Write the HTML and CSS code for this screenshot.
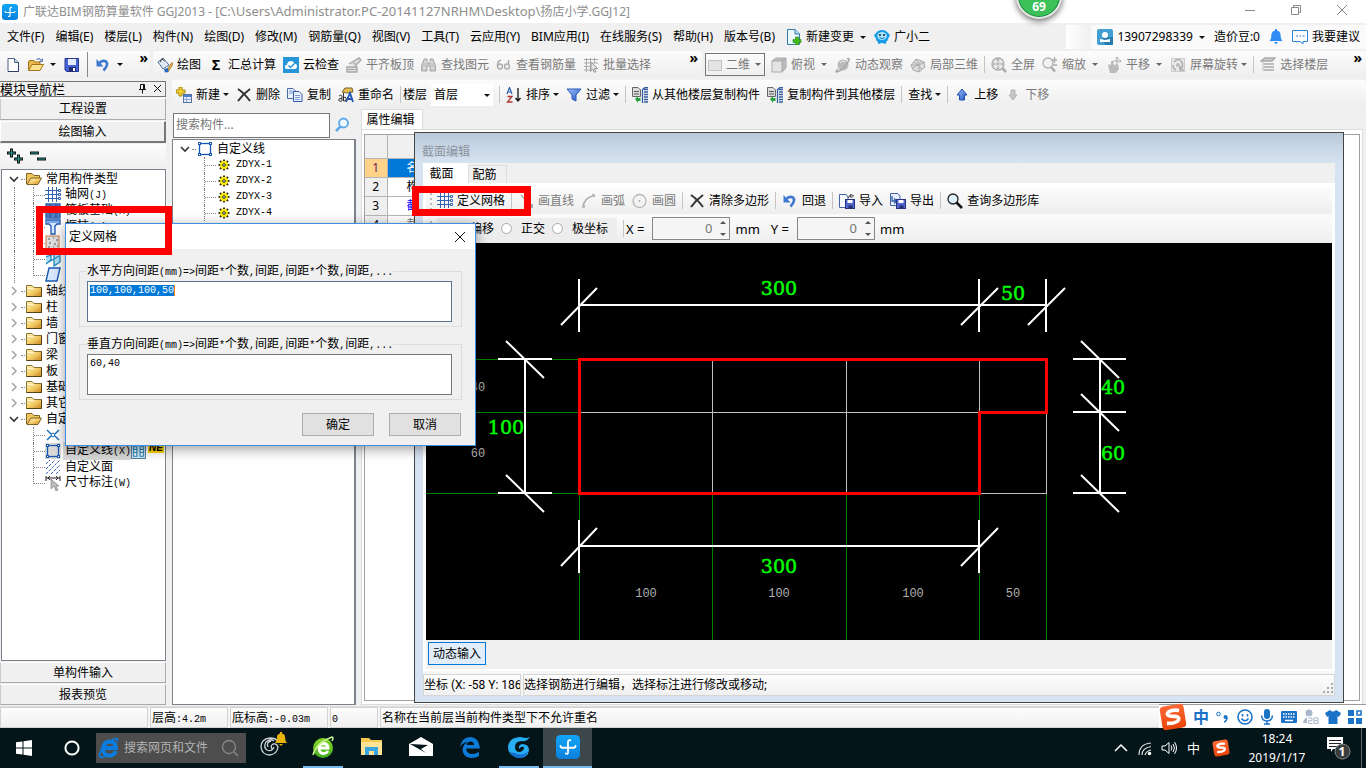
FILE: index.html
```html
<!DOCTYPE html>
<html lang="zh-CN">
<head>
<meta charset="utf-8">
<title>广联达BIM钢筋算量软件 GGJ2013</title>
<link rel="stylesheet" href="styles.css">
</head>
<body>
<svg class="defs" aria-hidden="true">
  <defs>
    <linearGradient id="gFold" x1="0" y1="0" x2="1" y2="1"><stop offset="0" stop-color="#fff3bd"/><stop offset=".5" stop-color="#f5cf6c"/><stop offset="1" stop-color="#c8871c"/></linearGradient>
    <linearGradient id="gApp" x1="0" y1="0" x2="0" y2="1"><stop offset="0" stop-color="#12a5f8"/><stop offset="1" stop-color="#0b7fdc"/></linearGradient>
    <linearGradient id="gBlue" x1="0" y1="0" x2="1" y2="1"><stop offset="0" stop-color="#9dc3ff"/><stop offset="1" stop-color="#2050c0"/></linearGradient>
    <linearGradient id="gGreen" x1="0" y1="0" x2="0" y2="1"><stop offset="0" stop-color="#8bd82a"/><stop offset="1" stop-color="#3fae1c"/></linearGradient>
    <linearGradient id="gSogou" x1="0" y1="0" x2="0" y2="1"><stop offset="0" stop-color="#ff6a35"/><stop offset="1" stop-color="#e84308"/></linearGradient>
  </defs>
  <symbol id="app" viewBox="0 0 16 16"><rect width="16" height="16" rx="3" fill="url(#gApp)"/><path d="M8 10V4.800Q8 3 9.600 3.600M3 7.300Q3 8.500 4.300 8.500H11.700Q13 8.500 13 7.300M8 8V11.500Q8 13 6.500 12.300" fill="none" stroke="#fff" stroke-width="1.200" stroke-linecap="round"/></symbol>
  <symbol id="newdoc" viewBox="0 0 16 16"><path d="M3 1.500H9.500L13.500 5.500V14.500H3Z" fill="#fff" stroke="#4a6187"/><path d="M9.500 1.500V5.500H13.500" fill="#c8d8f0" stroke="#4a6187"/><path d="M13.500 5.500V14.500H3" fill="none" stroke="#2d3f66"/></symbol>
  <symbol id="open" viewBox="0 0 16 16"><path d="M0.500 13V4.500L2 3.500H6L7 5H12V8" fill="#e8b84c" stroke="#a17319"/><path d="M0.500 13.500L4 7.500H15.500L12 13.500Z" fill="#fce18c" stroke="#a17319"/><path d="M8.500 2.500Q11 0 13.500 3.500M14.300 1.500V4.300H11.600" fill="none" stroke="#355f9f"/></symbol>
  <symbol id="save" viewBox="0 0 16 16"><path d="M1 1.500H14.500V14.500H2.500L1 13Z" fill="#4763d8" stroke="#26368d"/><rect x="4" y="2" width="8" height="6" fill="#e4ebff"/><rect x="5" y="10" width="7" height="4.500" fill="#202d70"/><rect x="9" y="11" width="2" height="3" fill="#fff"/></symbol>
  <symbol id="undo" viewBox="0 0 16 16"><path d="M4 6.500Q7 2.500 11 4.500Q14 7.500 8.500 13.500" fill="none" stroke="#3f78cf" stroke-width="2.600"/><path d="M1.500 2V9.500H8.500Z" fill="#3f78cf"/></symbol>
  <symbol id="paint" viewBox="0 0 16 16"><path d="M1 5L6 1L12 8L6 12Z" fill="#dfe8f5" stroke="#56709a"/><path d="M3.500 5Q4 0 7.500 4" fill="none" stroke="#333"/><path d="M9 14L15 5.500L16 7L11 15Z" fill="#e3b341" stroke="#91691c" stroke-width=".7"/><path d="M7 12L11 11L11.500 15L8 15.500Z" fill="#2566c5"/></symbol>
  <symbol id="cloud" viewBox="0 0 16 16"><rect width="16" height="16" fill="#2695d8"/><path d="M4 12Q1.500 12 2 9.500Q2.200 8 4 7.700Q4.500 4 8 4Q10.700 4 11.500 6.800Q14.500 7 14 10Q13.600 12 12 12Z" fill="#fff"/><path d="M5.500 8.500L7.500 10.500L11.500 6.500" fill="none" stroke="#2695d8" stroke-width="1.500"/></symbol>
  <symbol id="align" viewBox="0 0 16 16"><path d="M1 10H11V15H1ZM3 7L13 1L15 3L9 9" fill="#ddd" stroke="#a8a8a8" stroke-width="1.400"/><path d="M1 12.500H11M7 5.500L11 8" stroke="#a8a8a8"/></symbol>
  <symbol id="binoc" viewBox="0 0 16 16"><path d="M3 2H6V6H9V2H12L14.500 9V14H9V9H6V14H0.500V9Z" fill="#c8c8c8" stroke="#aaa"/><path d="M3 5H6M9 5H12M2 11H5M10 11H13" stroke="#eee"/></symbol>
  <symbol id="glasses" viewBox="0 0 16 16"><path d="M5 3Q1 4 1.500 9.500M12.500 3V10" fill="none" stroke="#aaa" stroke-width="1.300"/><circle cx="4" cy="9.500" r="2.500" fill="#eee" stroke="#aaa" stroke-width="1.300"/><circle cx="11" cy="9.500" r="2.500" fill="#eee" stroke="#aaa" stroke-width="1.300"/></symbol>
  <symbol id="batch" viewBox="0 0 16 16"><path d="M1 2.500H15M1 6H15M1 9.500H7M1 13H7M3.500 1V15M7.500 1V15M11.500 1V6" stroke="#aaa" fill="none"/><path d="M8 5L14.500 11.500H11.500L13 15L11 15L10 12L8 13.500Z" fill="#e5e5e5" stroke="#999"/></symbol>
  <symbol id="plane2" viewBox="0 0 16 16"><rect x="1.500" y="3.500" width="13" height="10" fill="#e3e3e3" stroke="#c3c3c3"/></symbol>
  <symbol id="cube" viewBox="0 0 16 16"><path d="M1 4L5 1H15L11 4ZM11 4L15 1V11L11 15Z" fill="#bdbdbd" stroke="#aaa"/><rect x="1" y="4" width="10" height="11" fill="#e4e4e4" stroke="#aaa"/></symbol>
  <symbol id="planet" viewBox="0 0 16 16"><circle cx="8" cy="8" r="5.500" fill="#bbb"/><path d="M3 12Q-1 16 3 14.500Q8 13 13 5Q16 0 12 2" fill="none" stroke="#aaa" stroke-width="1.500"/><path d="M5 6Q7 3 10 5" stroke="#eee" fill="none"/></symbol>
  <symbol id="orbit" viewBox="0 0 16 16"><path d="M1 8L6 2L14 5L15 10L9 15L3 13Z" fill="#ddd" stroke="#aaa"/><path d="M6 2L9 8L9 15M1 8L9 8L15 5M4 5L12 12M3 11L12 4" fill="none" stroke="#aaa"/></symbol>
  <symbol id="full" viewBox="0 0 16 16"><circle cx="7" cy="7" r="6" fill="#eee" stroke="#aaa" stroke-width="1.300"/><path d="M7 2V12M2 7H12M5.500 3.500L7 2L8.500 3.500M5.500 10.500L7 12L8.500 10.500M3.500 5.500L2 7L3.500 8.500M10.500 5.500L12 7L10.500 8.500" stroke="#aaa" fill="none"/><path d="M11.500 11.500L15 15" stroke="#aaa" stroke-width="2.500"/></symbol>
  <symbol id="zoomi" viewBox="0 0 16 16"><circle cx="6" cy="6" r="5" fill="#f2f2f2" stroke="#b2b2b2" stroke-width="1.300"/><path d="M9 10L13 14.500" stroke="#aaa" stroke-width="2.500"/><path d="M10 3H15M12.500 0V6M11 8H15" stroke="#aaa" stroke-width="1.300"/></symbol>
  <symbol id="pan" viewBox="0 0 16 16"><path d="M2 8L4 7L5 9V4L7 4L8 8L12 7L13 12L10 16H4Z" fill="#bbb"/><path d="M11 0V8M7 4H15M9.500 1.500L11 0L12.500 1.500M13.500 2.500L15 4L13.500 5.500" stroke="#aaa" fill="none"/></symbol>
  <symbol id="rot" viewBox="0 0 16 16"><rect x="1.500" y="1.500" width="13" height="13" fill="#e9e9e9" stroke="#ccc"/><path d="M4 5Q8 0 12 5Q14 10 10 12M10 9V13H14M3 8Q3 12 6 13" fill="none" stroke="#aaa" stroke-width="1.500"/><circle cx="8" cy="8" r="2" fill="#bbb"/></symbol>
  <symbol id="floors" viewBox="0 0 16 16"><path d="M1 4L5 1H15L12 4ZM4 7H14M4 10H14M4 13H14" fill="#ccc" stroke="#aaa" stroke-width="1.500"/><path d="M3 5V14" stroke="#bbb"/></symbol>
  <symbol id="newc" viewBox="0 0 16 16"><path d="M3 0H6V3H9V6H6V9H3V6H0V3H3Z" fill="#f4d32b" stroke="#a58811"/><rect x="7.500" y="7.500" width="8" height="8" fill="#e7f0ff" stroke="#56729f"/><rect x="8" y="8" width="7" height="2" fill="#4e7fd2"/><path d="M8 12.500H15M10.500 10V15" stroke="#8fa8cb"/></symbol>
  <symbol id="xdel" viewBox="0 0 16 16"><path d="M2 2Q8 6 14 14M14 2Q7 7 2 14" fill="none" stroke="#333" stroke-width="2"/></symbol>
  <symbol id="copy" viewBox="0 0 16 16"><path d="M.5 1.500H6L9 4.500V11.500H.5Z" fill="#eaf1ff" stroke="#4b6ba7"/><path d="M6.500 4.500H12L15 7.500V14.500H6.500Z" fill="#eaf1ff" stroke="#3159a5"/><path d="M2 4H6M2 6H6M8 8.500H13M8 10.500H13M8 12.500H13" stroke="#7799d8"/></symbol>
  <symbol id="rename" viewBox="0 0 16 16"><path d="M4 5L7 1H14L15 5L9 6Z" fill="#e8bd4e" stroke="#76622b"/><path d="M8 15L12 6L15 15M10 12H14" fill="none" stroke="#2355b5" stroke-width="1.800"/><path d="M1 9Q4 7 4 10V14Q0 15 1 12L4 11M5.500 6V14Q9 14 8 11Q7 9 5.500 11" fill="none" stroke="#333"/></symbol>
  <symbol id="sort" viewBox="0 0 16 16"><path d="M1 7L3.500 0.500L6 7M2 5H5" fill="none" stroke="#2a5fb0" stroke-width="1.200"/><path d="M1.500 9.500H6L1.500 15H6.500" fill="none" stroke="#a33" stroke-width="1.300"/><path d="M12 1V14M9.500 11L12 14L14.500 11" fill="none" stroke="#111" stroke-width="1.300"/></symbol>
  <symbol id="filter" viewBox="0 0 16 16"><path d="M1 2H15L10 8V14L6 12V8Z" fill="url(#gBlue)" stroke="#2a58b8"/></symbol>
  <symbol id="fcopy" viewBox="0 0 16 16"><path d="M.5 .5H6L8.500 3V9.500H.5Z" fill="#ddd" stroke="#666"/><path d="M2 4.500H7M2 7H7" stroke="#555"/><path d="M10.500 3V16M12 2.500H16M12 5H16M12 7.500H16M12 10H16M12 12.500H16M12 15H16M10 3L13 .5H16" fill="none" stroke="#345f9f" stroke-width="1.300"/><path d="M3 12L6 9V11H8.500V14H6V16Z" fill="#27a13b"/></symbol>
  <symbol id="up" viewBox="0 0 16 16"><path d="M8 2L13 8H10.500V13H5.500V8H3Z" fill="url(#gBlue)" stroke="#254fae"/></symbol>
  <symbol id="down" viewBox="0 0 16 16"><path d="M8 13L12 8H10V3H6V8H4Z" fill="#c7c7c7" stroke="#b2b2b2"/></symbol>
  <symbol id="change" viewBox="0 0 16 16"><path d="M1.500 .5H9L13.500 5V15.500H1.500Z" fill="#edf7ff" stroke="#3679a7"/><path d="M9 .5V5H13.500" fill="#b8dcf0" stroke="#3679a7"/><path d="M9.500 8H12.500V10.500H15V13.500H12.500V16H9.500V13.500H7V10.500H9.500Z" fill="#41bb18" stroke="#26870c" stroke-width=".6"/></symbol>
  <symbol id="mascot" viewBox="0 0 16 16"><path d="M2 4L4 2Q8 0 12 2L14 4L16 6L14 10Q14 12 12 13V15L8 14L4 15V13Q2 12 2 10L0 6Z" fill="#179be8"/><ellipse cx="8" cy="7" rx="4.800" ry="4" fill="#a9e2fb"/><circle cx="6" cy="6" r="1" fill="#123"/><circle cx="10" cy="6" r="1" fill="#123"/><path d="M5.500 8.500Q8 11 10.500 8.500" fill="none" stroke="#147dbd"/></symbol>
  <symbol id="user" viewBox="0 0 16 16"><rect width="16" height="16" rx="2" fill="#429fd2"/><path d="M5.500 9L8 16H16V8Z" fill="#267bad"/><circle cx="8" cy="6" r="3" fill="#fff"/><path d="M3 13V10L8 11L13 10V13Z" fill="#fff"/></symbol>
  <symbol id="bell" viewBox="0 0 16 16"><path d="M1.500 12Q3.500 10 3.500 5Q4 2 7 1.500V0H9V1.500Q12 2 12.500 5Q12.500 10 14.500 12Z" fill="#2f8df5"/><path d="M6 13H10L8 15.500Z" fill="#2f8df5"/></symbol>
  <symbol id="chat" viewBox="0 0 16 16"><path d="M.5 1.500H15.500V12.500H11V15L8 12.500H.5Z" fill="none" stroke="#2a83e0"/><path d="M4 7H6M7.500 7H9M10.500 7H12.500" stroke="#2a83e0"/></symbol>
  <symbol id="grid" viewBox="0 0 16 16"><path d="M0 3.500H13M0 7.500H13M0 11.500H13M3.500 0V15M7.500 0V15M11.500 0V15" stroke="#3465ae"/><path d="M13.500 2.500H15.500V4.500H13.500ZM13.500 6.500H15.500V8.500H13.500ZM13.500 10.500H15.500V12.500H13.500Z" fill="#fff" stroke="#3465ae"/></symbol>
  <symbol id="raft" viewBox="0 0 16 16"><path d="M1 1H15V15H1ZM1 5H15M1 11H15M5 1V15M11 1V15M1 3H15M1 13H15" fill="#cce0ff" stroke="#2457a6" stroke-width="1.300"/></symbol>
  <symbol id="column" viewBox="0 0 16 16"><path d="M1 1H15V5H12L10 7V15H6V7L4 5H1Z" fill="#d7e9ff" stroke="#1c55ae" stroke-width="1.300"/><path d="M2 3H14" stroke="#5c93dd" stroke-width="1.500"/></symbol>
  <symbol id="pad" viewBox="0 0 16 16"><rect x="1" y="1" width="13" height="13" fill="#ddd" stroke="#c87745"/><path d="M3 4H5M8 3H9M11 5H13M4 8H6M9 9H11M3 12H5M8 12H9M12 11H13" stroke="#555"/></symbol>
  <symbol id="pile" viewBox="0 0 16 16"><path d="M1 1L6 0V9L1 13M9 3L15 0V11L9 15ZM1 6L14 1M2 12L14 5" fill="#a9dff6" stroke="#2384ba" stroke-width="1.300"/></symbol>
  <symbol id="slab" viewBox="0 0 16 16"><path d="M4 1H15L12 14H1Z" fill="#d9e8ff" stroke="#1959b2" stroke-width="1.400"/></symbol>
  <symbol id="fclosed" viewBox="0 0 16 16"><path d="M.5 2.500H6L8 4.500H15.500V13.500H.5Z" fill="url(#gFold)" stroke="#8b702c"/><path d="M1 5.500H8" stroke="#fff4cb"/><path d="M15.500 4.500V13.500H.5" fill="none" stroke="#554217"/></symbol>
  <symbol id="fopen" viewBox="0 0 16 16"><path d="M.5 13V2.500H6L8 4.500H13.500V7" fill="#efc55d" stroke="#806423"/><path d="M1 13.500L5 7H15.500L12 13.500Z" fill="url(#gFold)" stroke="#806423"/></symbol>
  <symbol id="pointx" viewBox="0 0 16 16"><path d="M2 3L6 7M10 9L14 13M14 3L10 7M6 9L2 13" stroke="#1769bd" stroke-width="1.400"/><circle cx="8" cy="8" r="1.800" fill="none" stroke="#1769bd"/></symbol>
  <symbol id="square" viewBox="0 0 16 16"><rect x="2.500" y="2.500" width="11" height="11" fill="none" stroke="#1757af" stroke-width="1.300"/><path d="M1 1H4V4H1ZM12 1H15V4H12ZM1 12H4V15H1ZM12 12H15V15H12Z" fill="#1757af"/><path d="M2 2H3V3H2ZM13 2H14V3H13ZM2 13H3V14H2ZM13 13H14V14H13Z" fill="#fff"/></symbol>
  <symbol id="hatch" viewBox="0 0 16 16"><path d="M1 5L5 1M1 10L10 1M1 15L15 1M6 15L15 6M11 15L15 11" stroke="#3c65b8" stroke-dasharray="3 1"/></symbol>
  <symbol id="dim" viewBox="0 0 16 16"><path d="M1 1V6M15 1V6M1 3H15M5 1L3 3L5 5M11 1L13 3L11 5" fill="none" stroke="#222"/><path d="M6 4V14L9 11L11 16L13 15L11 11H14Z" fill="#bbb" stroke="#888" stroke-width=".7"/></symbol>
  <symbol id="gear" viewBox="0 0 16 16"><path d="M8 2.500V13.500M2.500 8H13.500M4 4L12 12M12 4L4 12" stroke="#3a3600" stroke-width="2"/><circle cx="8" cy="8" r="3.900" fill="#ffed00"/><circle cx="8" cy="8" r="1.300" fill="#fff" stroke="#222"/></symbol>
  <symbol id="mag" viewBox="0 0 16 16"><circle cx="9.500" cy="7" r="4.500" fill="#edf8ff" stroke="#5ba8ea" stroke-width="1.800"/><path d="M6.500 10.500L2 15" stroke="#5ba8ea" stroke-width="2.500"/></symbol>
  <symbol id="mag2" viewBox="0 0 16 16"><circle cx="6" cy="6" r="5" fill="#dff2fb" stroke="#222" stroke-width="1.300"/><path d="M9.500 9.500L15 15" stroke="#111" stroke-width="2.500"/></symbol>
  <symbol id="line" viewBox="0 0 16 16"><path d="M3 2L13 13" stroke="#aaa" stroke-width="1.300"/><path d="M12 11H15V15H12Z" fill="#aaa"/></symbol>
  <symbol id="arc" viewBox="0 0 16 16"><path d="M2 14Q3 5 12 3" fill="none" stroke="#aaa" stroke-width="1.300"/><path d="M11 1H14V4H11ZM1 12H4V15H1Z" fill="#bbb"/></symbol>
  <symbol id="circ" viewBox="0 0 16 16"><circle cx="7.500" cy="8" r="6.500" fill="#f3f3f3" stroke="#b7b7b7" stroke-width="1.300"/><circle cx="7.500" cy="8" r="1" fill="#aaa"/></symbol>
  <symbol id="imp" viewBox="0 0 16 16"><path d="M.5 1.500H7L9 4V14.500H.5Z" fill="#f6faff" stroke="#4464a5"/><rect x="6.500" y="6.500" width="9" height="9" fill="#5265cf" stroke="#26347d"/><path d="M8.500 7H13.500V10H8.500Z" fill="#fff"/><path d="M9.500 12.500H13.500V15H9.500Z" fill="#222e70"/><path d="M9 5Q11 0 15 3M12 1L11 4L14 4" fill="none" stroke="#444"/></symbol>
  <symbol id="exp" viewBox="0 0 16 16"><path d="M.5 .5H8L10 3V12.500H.5Z" fill="#e7efff" stroke="#4464a5"/><path d="M2 3V8H6M4 5.500L6.500 8L4 10.500" fill="none" stroke="#2c5ba5" stroke-width="1.300"/><rect x="6.500" y="6.500" width="9" height="9" fill="#5265cf" stroke="#26347d"/><path d="M8.500 7H13.500V10H8.500Z" fill="#fff"/><path d="M9.500 12.500H13.500V15H9.500Z" fill="#222e70"/></symbol>
  <symbol id="sogou" viewBox="0 0 28 28"><g transform="rotate(-9 14 14)"><rect x="2" y="2" width="24" height="24" rx="4" fill="url(#gSogou)"/><path d="M21 8.500Q15 6.500 10.500 8.200Q7.500 10 10 12Q12 13.200 16 13.700Q21 15 19 17.800Q16 21 7 19.300" fill="none" stroke="#fff" stroke-width="3.600"/></g></symbol>
  <symbol id="ie" viewBox="0 0 24 24"><path d="M19 15Q17 20 12 19.500Q6 19 6 12.500Q6.500 6 12.500 5.500Q19 6 19 12H7" fill="none" stroke="currentColor" stroke-width="3.800"/><path d="M20 6Q22 1.500 17 3Q5 9 2.500 18Q2 23.500 9 20" fill="none" stroke="currentColor" stroke-width="1.800"/></symbol>
  <symbol id="edge" viewBox="0 0 24 24"><path d="M2 12Q4 2 12 2Q21 2 22 13.500H8Q9 19 14 19Q18 19 21 17V21Q18 23 13 23Q5 22 4.500 15Q5 9 10 7Q5 7 2 12ZM8.500 10H16Q16 6.500 12.500 6.500Q9 7 8.500 10Z" fill="#0b7ad8"/></symbol>
  <symbol id="twOpen" viewBox="0 0 12 12"><path d="M2 4L6 8L10 4" fill="none" stroke="#333" stroke-width="1.600"/></symbol>
  <symbol id="twShut" viewBox="0 0 12 12"><path d="M4 2L8 6L4 10" fill="none" stroke="#a2a2a2" stroke-width="1.500"/></symbol>
</svg>

<div class="app">
  <header class="titlebar">
    <svg class="ic"><use href="#app"/></svg>
    <h1 class="title">广联达BIM钢筋算量软件 GGJ2013 - [<span class="path">C:\Users\Administrator.PC-20141127NRHM\Desktop\</span>扬店小学.GGJ12]</h1>
    <div class="winbtns">
      <button aria-label="最小化"><svg viewBox="0 0 12 12"><path d="M1 6.500H11"/></svg></button>
      <button aria-label="还原"><svg viewBox="0 0 12 12"><path d="M1.500 3.500H8.500V10.500H1.500ZM3.500 3.500V1.500H10.500V8.500H8.500"/></svg></button>
      <button aria-label="关闭"><svg viewBox="0 0 12 12"><path d="M1 1L11 11M11 1L1 11"/></svg></button>
    </div>
  </header>

  <nav class="menubar">
    <button>文件(F)</button><button>编辑(E)</button><button>楼层(L)</button><button>构件(N)</button><button>绘图(D)</button><button>修改(M)</button><button>钢筋量(Q)</button><button>视图(V)</button><button>工具(T)</button><button>云应用(Y)</button><button>BIM应用(I)</button><button>在线服务(S)</button><button>帮助(H)</button><button>版本号(B)</button>
    <button class="tool"><svg class="ic"><use href="#change"/></svg>新建变更<i class="caret"></i></button>
    <button class="tool mascot"><svg class="ic"><use href="#mascot"/></svg>广小二</button>
    <div class="account">
      <button class="tool"><svg class="ic"><use href="#user"/></svg>13907298339<i class="caret"></i></button>
      <span>造价豆:0</span>
      <button class="tool" aria-label="通知"><svg class="ic"><use href="#bell"/></svg></button>
      <button class="tool"><svg class="ic"><use href="#chat"/></svg>我要建议</button>
    </div>
  </nav>

  <div class="toolbars">
    <div class="band band-file">
      <button class="tool" aria-label="新建"><svg class="ic"><use href="#newdoc"/></svg></button>
      <button class="tool" aria-label="打开"><svg class="ic"><use href="#open"/></svg><i class="caret"></i></button>
      <button class="tool" aria-label="保存"><svg class="ic"><use href="#save"/></svg></button>
      <i class="sep dark"></i>
      <button class="tool" aria-label="撤销"><svg class="ic"><use href="#undo"/></svg><i class="caret"></i></button>
      <button class="more">»</button>
    </div>
    <div class="band band-draw">
      <button class="tool"><svg class="ic"><use href="#paint"/></svg>绘图</button>
      <button class="tool"><b class="sigma">Σ</b>汇总计算</button>
      <button class="tool"><svg class="ic"><use href="#cloud"/></svg>云检查</button>
      <button class="tool off"><svg class="ic"><use href="#align"/></svg>平齐板顶</button>
      <button class="tool off"><svg class="ic"><use href="#binoc"/></svg>查找图元</button>
      <button class="tool off"><svg class="ic"><use href="#glasses"/></svg>查看钢筋量</button>
      <button class="tool off"><svg class="ic"><use href="#batch"/></svg>批量选择</button>
      <button class="more">»</button>
    </div>
    <div class="band band-view">
      <button class="tool off boxed"><svg class="ic"><use href="#plane2"/></svg>二维<i class="caret"></i></button>
      <button class="tool off"><svg class="ic"><use href="#cube"/></svg>俯视<i class="caret"></i></button>
      <button class="tool off"><svg class="ic"><use href="#planet"/></svg>动态观察</button>
      <button class="tool off"><svg class="ic"><use href="#orbit"/></svg>局部三维</button>
      <i class="sep"></i>
      <button class="tool off"><svg class="ic"><use href="#full"/></svg>全屏</button>
      <button class="tool off"><svg class="ic"><use href="#zoomi"/></svg>缩放<i class="caret"></i></button>
      <button class="tool off"><svg class="ic"><use href="#pan"/></svg>平移<i class="caret"></i></button>
      <button class="tool off"><svg class="ic"><use href="#rot"/></svg>屏幕旋转<i class="caret near"></i></button>
      <i class="sep"></i>
      <button class="tool off"><svg class="ic"><use href="#floors"/></svg>选择楼层</button>
      <button class="more">»</button>
    </div>
  </div>

  <main class="work">
    <aside class="nav">
      <div class="nav-head"><span>模块导航栏</span><svg class="pin" viewBox="0 0 24 10"><path d="M2.500 .5H6.500V5.500M2.500 .5V5.500M1 5.500H8M4.500 5.500V9.500M5.500 .5V5.500M16 1L23 8M23 1L16 8"/></svg></div>
      <button class="bar">工程设置</button>
      <button class="bar raised">绘图输入</button>
      <div class="nav-tools">
        <button aria-label="展开"><svg viewBox="0 0 18 16"><path d="M1 5H10M5.500 .5V9.500M8 11H17M12.500 6.500V15.500" stroke="#111" stroke-width="3"/><path d="M2 5H9M5.500 1.500V8.500M9 11H16M12.500 7.500V14.500" stroke="#2a9a94"/></svg></button>
        <button aria-label="折叠"><svg viewBox="0 0 18 16"><path d="M1 5H10M8 11H17" stroke="#111" stroke-width="3"/><path d="M2 5H9M9 11H16" stroke="#2a9a94"/></svg></button>
      </div>
      <ul class="tree">
        <li class="l1 open"><svg class="tw"><use href="#twOpen"/></svg><svg class="ic"><use href="#fopen"/></svg>常用构件类型</li>
        <li class="l2"><svg class="ic"><use href="#grid"/></svg><span>轴网<small>(J)</small></span></li>
        <li class="l2"><svg class="ic"><use href="#raft"/></svg><span>筏板基础<small>(M)</small></span></li>
        <li class="l2"><svg class="ic"><use href="#column"/></svg><span>框柱<small>(Z)</small></span></li>
        <li class="l2"><svg class="ic"><use href="#pad"/></svg></li>
        <li class="l2"><svg class="ic"><use href="#pile"/></svg></li>
        <li class="l2 last"><svg class="ic"><use href="#slab"/></svg></li>
        <li class="l1"><svg class="tw"><use href="#twShut"/></svg><svg class="ic"><use href="#fclosed"/></svg>轴线</li>
        <li class="l1"><svg class="tw"><use href="#twShut"/></svg><svg class="ic"><use href="#fclosed"/></svg>柱</li>
        <li class="l1"><svg class="tw"><use href="#twShut"/></svg><svg class="ic"><use href="#fclosed"/></svg>墙</li>
        <li class="l1"><svg class="tw"><use href="#twShut"/></svg><svg class="ic"><use href="#fclosed"/></svg>门窗洞</li>
        <li class="l1"><svg class="tw"><use href="#twShut"/></svg><svg class="ic"><use href="#fclosed"/></svg>梁</li>
        <li class="l1"><svg class="tw"><use href="#twShut"/></svg><svg class="ic"><use href="#fclosed"/></svg>板</li>
        <li class="l1"><svg class="tw"><use href="#twShut"/></svg><svg class="ic"><use href="#fclosed"/></svg>基础</li>
        <li class="l1"><svg class="tw"><use href="#twShut"/></svg><svg class="ic"><use href="#fclosed"/></svg>其它</li>
        <li class="l1 open"><svg class="tw"><use href="#twOpen"/></svg><svg class="ic"><use href="#fopen"/></svg>自定义</li>
        <li class="l2 end"><svg class="ic"><use href="#pointx"/></svg></li>
        <li class="l2 end cur"><svg class="ic"><use href="#square"/></svg><span>自定义线<small>(X)</small></span><svg class="book" viewBox="0 0 14 14"><path d="M.5 .5H13.500V13.500H.5Z" fill="#cfe8f8" stroke="#5a7f9c"/><path d="M2.500 2.500H5.500V11.500H2.500ZM8.500 2.500H11.500V11.500H8.500ZM2.500 5H5.500M2.500 8H5.500M8.500 5H11.500M8.500 8H11.500" fill="#fff" stroke="#2384ba"/></svg><em class="new">NE</em></li>
        <li class="l2 end"><svg class="ic"><use href="#hatch"/></svg>自定义面</li>
        <li class="l2 end last"><svg class="ic"><use href="#dim"/></svg><span>尺寸标注<small>(W)</small></span></li>
      </ul>
      <button class="bar foot">单构件输入</button>
      <button class="bar foot">报表预览</button>
    </aside>

    <section class="right">
      <div class="band comp-tools">
        <button class="tool"><svg class="ic"><use href="#newc"/></svg>新建<i class="caret near"></i></button>
        <button class="tool"><svg class="ic"><use href="#xdel"/></svg>删除</button>
        <button class="tool"><svg class="ic"><use href="#copy"/></svg>复制</button>
        <button class="tool"><svg class="ic"><use href="#rename"/></svg>重命名</button>
        <i class="sep"></i>
        <label class="floor">楼层<select><option>首层</option></select></label>
        <i class="sep"></i>
        <button class="tool"><svg class="ic"><use href="#sort"/></svg>排序<i class="caret near"></i></button>
        <button class="tool"><svg class="ic"><use href="#filter"/></svg>过滤<i class="caret near"></i></button>
        <i class="sep"></i>
        <button class="tool"><svg class="ic"><use href="#fcopy"/></svg>从其他楼层复制构件</button>
        <button class="tool"><svg class="ic"><use href="#fcopy"/></svg>复制构件到其他楼层</button>
        <i class="sep"></i>
        <button class="tool">查找<i class="caret near"></i></button>
        <i class="sep"></i>
        <button class="tool"><svg class="ic"><use href="#up"/></svg>上移</button>
        <button class="tool off"><svg class="ic"><use href="#down"/></svg>下移</button>
      </div>
      <div class="panes">
        <div class="list">
          <div class="search"><input type="text" placeholder="搜索构件..." aria-label="搜索构件"><button aria-label="搜索"><svg class="ic"><use href="#mag"/></svg></button></div>
          <ul class="tree comps">
            <li class="l1 open"><svg class="tw"><use href="#twOpen"/></svg><svg class="ic"><use href="#square"/></svg>自定义线</li>
            <li class="l2"><svg class="ic"><use href="#gear"/></svg><small>ZDYX-1</small></li>
            <li class="l2"><svg class="ic"><use href="#gear"/></svg><small>ZDYX-2</small></li>
            <li class="l2"><svg class="ic"><use href="#gear"/></svg><small>ZDYX-3</small></li>
            <li class="l2"><svg class="ic"><use href="#gear"/></svg><small>ZDYX-4</small></li>
          </ul>
        </div>
        <div class="props">
          <button class="proptab">属性编辑</button>
          <div class="propbody">
            <table>
              <tr><th></th><th></th></tr>
              <tr class="sel"><th>1</th><td>名称</td></tr>
              <tr><th>2</th><td>构件类型</td></tr>
              <tr class="link"><th>3</th><td>截面形状</td></tr>
              <tr class="dim"><th>4</th><td>截面宽度</td></tr>
            </table>
          </div>
        </div>
      </div>
    </section>
  </main>

  <footer class="status">
    <span class="s0"></span><span class="s1">层高<small>:4.2m</small></span><span class="s2">底标高<small>:-0.03m</small></span><span class="s3"><small>0</small></span><span class="s4">名称在当前层当前构件类型下不允许重名</span>
  </footer>

  <div class="taskbar">
    <button class="t-win" aria-label="开始"><svg viewBox="0 0 16 16"><path d="M0 2.300L6.500 1.400V7.500H0ZM7.500 1.200L16 0V7.500H7.500ZM0 8.500H6.500V14.600L0 13.700ZM7.500 8.500H16V16L7.500 14.800Z" fill="#fff"/></svg></button>
    <button class="t-win" aria-label="Cortana"><svg viewBox="0 0 16 16"><circle cx="8" cy="8" r="6.600" fill="none" stroke="#fff" stroke-width="2"/></svg></button>
    <label class="t-search"><svg class="big ieb"><use href="#ie"/></svg><input type="text" placeholder="搜索网页和文件" aria-label="搜索网页和文件"><svg class="lens" viewBox="0 0 18 18"><circle cx="8" cy="8" r="6.500" fill="none" stroke="#8a8a8a" stroke-width="1.300"/><path d="M13 13L17 17" stroke="#8a8a8a" stroke-width="1.300"/></svg></label>
    <button class="t-app" aria-label="助手"><svg class="wide" viewBox="0 0 30 26"><path d="M20 9Q19 6 13 6Q4 7 4 15Q5 23 13 23Q20 22 21 15Q20 11 16 12Q13 14 15 17M17 9Q13 6 9 10Q6 15 10 18Q15 20 17 15M14 9Q9 10 11 15" fill="none" stroke="#cdd2d4" stroke-width="1.300"/><path d="M18 11Q20 9 20 5Q20 2 23 1.500V0H25V1.500Q28 2 28 5Q28 9 30 11ZM22 12H26L24 14Z" fill="#e8b30c"/></svg></button>
    <button class="t-app run" aria-label="浏览器"><svg class="big" viewBox="0 0 24 24"><circle cx="12" cy="13" r="10" fill="url(#gGreen)"/><path d="M17 16Q15 19 12 18.500Q8 18 8 13Q8 9 12.500 8.500Q17 9 17 13H9" fill="none" stroke="#fff" stroke-width="2.800"/><path d="M2 20Q5 8 21 2Q23 2 21 6" fill="none" stroke="#c7f28d" stroke-width="1.500"/></svg></button>
    <button class="t-app" aria-label="文件资源管理器"><svg class="big" viewBox="0 0 24 24"><path d="M1 3H9L11 5H22V20H1Z" fill="#f5c94e"/><path d="M1 7H22V20H1Z" fill="#ffe394"/><path d="M5 20V12H18V20H14V16H9V20Z" fill="#35a5df"/></svg></button>
    <button class="t-app" aria-label="邮件"><svg class="big" viewBox="0 0 24 24"><path d="M0 9L12 2L24 9V21H0Z" fill="#fff"/><path d="M1 9L19 10L12 14L17 18Z" fill="#04151a"/></svg></button>
    <button class="t-app" aria-label="Edge"><svg class="big"><use href="#edge"/></svg></button>
    <button class="t-app run" aria-label="广联达"><svg class="big" viewBox="0 0 24 24"><path d="M23 2Q20 7 15 6Q8 6 8 12Q8 17 13 17Q17 16 17 12Q14 11 12 14Q11 10 15 9Q22 9 22 15Q21 23 12 23Q1 21 1 12Q2 2 14 2Q20 4 23 2Z" fill="#28aef5"/><path d="M3 17Q5 22 12 23Q20 22 21 16Q16 22 8 18Z" fill="#1470d0"/></svg></button>
    <button class="t-app active" aria-label="广联达BIM钢筋算量软件"><svg class="big"><use href="#app"/></svg></button>
    <div class="tray">
      <svg class="t16" viewBox="0 0 16 16"><path d="M2 11L8 5L14 11" fill="none" stroke="#fff" stroke-width="1.500"/></svg>
      <svg class="t16" viewBox="0 0 16 16"><path d="M2 15Q2 4 14 3M5 15Q5 8 14 6.500M8 15Q9 11 14 10" fill="none" stroke="#ddd" stroke-width="1.200"/><circle cx="12.500" cy="13.500" r="1.800" fill="#fff"/></svg>
      <svg class="t16" viewBox="0 0 16 16"><path d="M1 6H4L8 2.500V13.500L4 10H1ZM10 5.500Q12 8 10 10.500M12 4Q15 8 12 12M13.500 2Q17.500 8 13.500 14" fill="none" stroke="#fff"/></svg>
      <span class="lang">中</span>
      <svg class="t18"><use href="#sogou"/></svg>
      <div class="clock"><span>18:24</span><span>2019/1/17</span></div>
      <svg class="note" viewBox="0 0 26 24"><path d="M1 1H17V13H7L5 16V13H1Z" fill="#fff"/><path d="M3 4.500H15M3 7.500H15M3 10.500H11" stroke="#222"/><circle cx="16.500" cy="15.500" r="7.500" fill="#3a3d3e" stroke="#888"/><text x="16" y="20" class="badge">1</text></svg>
    </div>
  </div>
</div>

<section class="editor" aria-label="截面编辑">
  <h2>截面编辑</h2>
  <div class="etabs"><button class="on">截面</button><button>配筋</button></div>
  <div class="ebody">
    <div class="band etools">
      <i class="grip"></i>
      <button class="tool"><svg class="ic"><use href="#grid"/></svg>定义网格</button>
      <i class="sep"></i>
      <button class="tool off"><svg class="ic"><use href="#line"/></svg>画直线</button>
      <button class="tool off"><svg class="ic"><use href="#arc"/></svg>画弧</button>
      <button class="tool off"><svg class="ic"><use href="#circ"/></svg>画圆</button>
      <i class="sep"></i>
      <button class="tool"><svg class="ic"><use href="#xdel"/></svg>清除多边形</button>
      <i class="sep"></i>
      <button class="tool"><svg class="ic"><use href="#undo"/></svg>回退</button>
      <i class="sep"></i>
      <button class="tool"><svg class="ic"><use href="#imp"/></svg>导入</button>
      <button class="tool"><svg class="ic"><use href="#exp"/></svg>导出</button>
      <i class="sep"></i>
      <button class="tool"><svg class="ic"><use href="#mag2"/></svg>查询多边形库</button>
    </div>
    <div class="band ecoords">
      <i class="grip"></i>
      <div class="radios">
        <label><input type="radio" name="off" disabled>不偏移</label>
        <label><input type="radio" name="off" disabled>正交</label>
        <label><input type="radio" name="off" disabled>极坐标</label>
      </div>
      <i class="sep"></i>
      <label class="num">X = <span class="spin"><input type="text" value="0"><i></i></span></label><span>mm</span>
      <label class="num second">Y = <span class="spin"><input type="text" value="0"><i></i></span></label><span>mm</span>
    </div>
    <svg class="canvas" viewBox="426 243 906 397" preserveAspectRatio="xMinYMin slice">
      <path class="axis" d="M426 359.500H579M426 412.500H579M426 493.500H579M579.500 493V640M712.500 493V640M846.500 493V640M979.500 493V640M1046.500 493V640"/>
      <path class="mesh" d="M712.500 359V493M846.500 359V493M979.500 359V412M579 412.500H979M1046.500 412V493.500M979 493.500H1047"/>
      <path class="dimline" d="M579 305H1046M579 279V332M979 279V332M1046 279V332M579 546H979M579 520V573M979 520V573M525 359V493M498 359H552M498 493H552M1100 359V493M1073 359H1126M1073 412H1126M1073 493H1126"/>
      <path class="dimline" d="M561 325L597 288M961 325L998 288M1028 325L1065 288M561 566L597 528M961 566L998 528M506 341L544 378M506 475L544 512M1081 341L1119 378M1081 394L1119 431M1081 475L1119 512"/>
      <path class="shape" d="M579.500 359.500H1046.500V412.500H979.500V493.500H579.500Z"/>
      <g class="big-n"><text x="779" y="295">300</text><text x="1013" y="300">50</text><text x="506" y="434">100</text><text x="1113" y="394">40</text><text x="1113" y="460">60</text><text x="779" y="573">300</text></g>
      <g class="small-n"><text x="478" y="391">40</text><text x="478" y="457">60</text><text x="646" y="597">100</text><text x="779" y="597">100</text><text x="913" y="597">100</text><text x="1013" y="597">50</text></g>
    </svg>
    <div class="dyn"><button>动态输入</button></div>
  </div>
  <div class="estatus"><span class="pos">坐标 (X: -58 Y: 186</span><span class="hint">选择钢筋进行编辑，选择标注进行修改或移动;<svg viewBox="0 0 12 12"><path d="M9 1H11M5 5H7M9 5H11M1 9H3M5 9H7M9 9H11" stroke="#aaa" stroke-width="2"/></svg></span></div>
</section>

<section class="dialog" role="dialog" aria-label="定义网格">
  <header><h2>定义网格</h2><button aria-label="关闭"><svg viewBox="0 0 12 12"><path d="M1 1L11 11M11 1L1 11"/></svg></button></header>
  <div class="dbody">
    <fieldset><legend>水平方向间距<small>(mm)=&gt;</small>间距<small>*</small>个数<small>,</small>间距<small>,</small>间距<small>*</small>个数<small>,</small>间距<small>,...</small></legend><div class="area" contenteditable="true" role="textbox" aria-label="水平方向间距"><mark>100,100,100,50</mark></div></fieldset>
    <fieldset><legend>垂直方向间距<small>(mm)=&gt;</small>间距<small>*</small>个数<small>,</small>间距<small>,</small>间距<small>*</small>个数<small>,</small>间距<small>,...</small></legend><textarea class="area" aria-label="垂直方向间距">60,40</textarea></fieldset>
    <div class="dbtns"><button>确定</button><button>取消</button></div>
  </div>
</section>

<div class="redbox r-title"></div>
<div class="redbox r-tool"></div>
<div class="orb">69</div>

<div class="ime">
  <svg class="s28"><use href="#sogou"/></svg>
  <b>中</b>
  <svg viewBox="0 0 16 16"><circle cx="3.500" cy="5" r="1.800" fill="none" stroke="#1b73c8"/><circle cx="10.500" cy="8" r="2" fill="#1b73c8"/><path d="M12 8Q12 12 9 13" fill="none" stroke="#1b73c8" stroke-width="1.500"/></svg>
  <svg viewBox="0 0 16 16"><circle cx="8" cy="8" r="7" fill="none" stroke="#1b73c8" stroke-width="1.600"/><path d="M5.500 5V7.500M10.500 5V7.500M4.500 9.500Q8 14 11.500 9.500" fill="none" stroke="#1b73c8" stroke-width="1.600"/></svg>
  <svg viewBox="0 0 16 16"><rect x="5" y="0" width="6" height="10" rx="3" fill="#1b73c8"/><path d="M2.500 6.500Q3 12 8 12Q13 12 13.500 6.500M8 12V15M5 15H11" fill="none" stroke="#1b73c8" stroke-width="1.500"/></svg>
  <svg viewBox="0 0 16 16"><rect x="0" y="2" width="16" height="12" rx="1" fill="#1b73c8"/><path d="M2 5H14M2 8H14" stroke="#fff" stroke-width="1.500" stroke-dasharray="1.500 1"/><path d="M4 11.500H12" stroke="#fff" stroke-width="1.500"/></svg>
  <svg viewBox="0 0 16 16"><circle cx="6" cy="4" r="3.500" fill="#a9b7cc"/><path d="M0 14Q1 8 6 8.500H12V14Z" fill="#a9b7cc"/><path d="M4 7.500H16V16H4Z" fill="#fff"/><path d="M5 9H9V11.700H5.500V14.500H9.500M11 9H15V14.500H11ZM11 11.700H15" fill="none" stroke="#a9b7cc"/></svg>
  <svg viewBox="0 0 16 16"><path d="M5 1Q8 4 11 1L16 4L14 8L12.500 7V15H3.500V7L2 8L0 4Z" fill="#1b73c8"/></svg>
  <svg viewBox="0 0 16 16"><path d="M1 1H7V7H1ZM1 9H7V15H1ZM9 9H15V15H9Z" fill="#1b73c8"/><path d="M10 2H14V6H10Z" fill="none" stroke="#1b73c8" stroke-width="1.600"/></svg>
</div>
</body>
</html>
```
FILE: styles.css
```css
* { box-sizing: border-box; }
body {
  margin: 0;
  font: 12px/16px "Noto Sans", "Noto Sans CJK SC", sans-serif;
  color: #000;
  background: #f0f0f0;
  overflow: hidden;
}
button, input, select, textarea { font: inherit; color: inherit; }
button { border: 0; background: none; padding: 0; white-space: nowrap; }
h1, h2 { margin: 0; font-size: 12px; font-weight: 400; }
ul { list-style: none; margin: 0; padding: 0; }
small { font: 10px/16px "Liberation Mono", monospace; white-space: pre; }
.defs { position: absolute; width: 0; height: 0; }
.ic { width: 16px; height: 16px; flex: none; }

.app { display: flex; flex-direction: column; min-height: 100vh; }

/* title bar */
.titlebar { display: flex; align-items: center; height: 23px; padding-left: 2px; gap: 5px; background: #fff; }
.title { flex: 1; color: #8e8e8e; white-space: nowrap; }
.path { font-size: 13px; }
.winbtns { display: flex; gap: 34px; padding: 0 18px 3px 0; }
.winbtns svg { display: block; width: 12px; height: 12px; fill: none; stroke: #888; }

/* menu */
.menubar { display: flex; align-items: center; height: 28px; padding-left: 7px; gap: 11px; white-space: nowrap; }
.mascot { margin-left: -4px; }
.account { display: flex; align-items: center; gap: 8px; margin-left: auto; height: 24px; padding: 0 6px 0 31px; background: linear-gradient(90deg, #fff, #f0f0f0 24px, #fafafa 26px); }
.tool { display: flex; align-items: center; gap: 4px; }
.off { color: #7a7a7a; }
.caret { width: 0; height: 0; margin: 0 1px 0 2px; border: 3px solid transparent; border-top: 3px solid #111; border-bottom: 0; }
.caret.near { margin: 0 0 0 -1px; }
.off .caret { border-top-color: #666; }
.sep { width: 1px; height: 17px; background: #c4c4c4; margin: 0 -1px; }
.sep.dark { height: 25px; background: #888; margin: 0; }
.band { display: flex; align-items: center; gap: 7px; background: linear-gradient(#fcfcfc, #eee); border-radius: 3px; white-space: nowrap; }
.more { margin-left: auto; font-weight: 700; font-size: 14px; line-height: 14px; align-self: flex-start; }
.sigma { width: 16px; text-align: center; font-size: 14px; }

.toolbars { display: flex; gap: 3px; height: 29px; padding-bottom: 2px; }
.band-file { flex: 0 0 150px; padding: 0 2px 0 5px; }
.band-draw { flex: 0 0 549px; padding: 0 4px; }
.band-view { flex: 1; padding-right: 4px; min-width: 0; }
.boxed { border: 1px solid #777; height: 23px; padding: 0 2px 0 1px; gap: 3px; margin-right: -1px; }

/* work area */
.work { display: flex; flex: 1; gap: 5px; min-height: 0; }
.nav { width: 167px; display: flex; flex-direction: column; padding: 1px 1px 1px 0; gap: 1px; }
.nav-head { display: flex; justify-content: space-between; align-items: center; height: 16px; border: 1px solid #777; border-left: 0; line-height: 14px; }
.nav-head span { font-size: 13px; }
.pin { width: 24px; height: 10px; margin-right: 3px; fill: none; stroke: #111; }
.bar { height: 22px; border: 1px solid #aaa; border-top-color: #fff; border-left-color: #ccc; background: #f0f0f0; flex: none; }
.bar.foot { height: 21px; }
.raised { border-width: 1px 2px 2px 1px; border-color: #fff #777 #777 #fff; }
.nav-tools { display: flex; gap: 5px; align-items: center; height: 24px; padding: 0 6px; background: linear-gradient(#fcfcfc, #f0f0f0); }
.nav-tools svg { display: block; width: 18px; height: 16px; fill: none; }
.tree { flex: 1; background: #fff; border: 1px solid #7d838c; margin-left: 1px; padding-top: 1px; overflow: hidden; }
.tree li { display: flex; align-items: center; height: 16px; white-space: nowrap; position: relative; }
.tw { width: 12px; height: 12px; flex: none; }
.l1 { padding-left: 6px; gap: 4px; }
.l1 .tw { margin-right: 2px; }
.l1::before { content: ""; position: absolute; left: 19px; width: 4px; top: 8px; border-top: 1px dotted #888; }
.l2 { padding-left: 43px; gap: 4px; }
.l2::before { content: ""; position: absolute; left: 31px; top: 0; width: 11px; height: 16px; border-left: 1px dotted #777; background: repeating-linear-gradient(90deg, #888 0 1px, transparent 1px 2px) 0 8px / 100% 1px no-repeat; }
.l2.last::before { height: 9px; }
.l2:not(.end)::after { content: ""; position: absolute; left: 12px; top: 0; height: 16px; border-left: 1px dotted #777; }
.cur span { background: #d8d8d8; padding-left: 2px; margin-left: -2px; }
.cur .ic { background: #d8d8d8; }
.book { width: 15px; height: 15px; flex: none; margin-left: -4px; }
.new { position: absolute; left: 146px; top: 0; padding: 0 1px; font: italic 700 10px/10px "Liberation Sans", sans-serif; background: #ffd900; }
.comps { margin-left: 0; border-width: 1px 2px 1px 1px; }
.comps .l2::after { display: none; }

.right { flex: 1; display: flex; flex-direction: column; min-width: 0; }
.comp-tools { height: 28px; padding: 1px 0 0 4px; }
.floor { position: relative; display: flex; align-items: center; gap: 4px; margin-left: -4px; }
.floor select { appearance: none; width: 62px; height: 22px; border: 0; padding: 0 3px; background: #fff; }
.floor::after { content: ""; position: absolute; right: 3px; top: 10px; border: 3px solid transparent; border-top-color: #111; border-bottom: 0; }
.panes { flex: 1; display: flex; gap: 5px; }
.list { width: 184px; display: flex; flex-direction: column; padding-bottom: 1px; }
.search { display: flex; gap: 4px; height: 31px; padding: 5px 0 0 1px; }
.search input { width: 157px; height: 25px; border: 1px solid #777; padding: 0 2px 3px; background: #fff; }
.search input::placeholder { color: #777; opacity: 1; }
.props { flex: 1; display: flex; flex-direction: column; padding: 1px 3px 1px 0; }
.proptab { align-self: flex-start; width: 62px; height: 20px; padding-right: 3px; background: #fff; border: 1px solid #dcdcdc; border-bottom: 0; }
.propbody { flex: 1; background: #fff; border: 1px solid #dcdcdc; padding: 4px 2px 3px; display: flex; }
.propbody table { flex: 1; display: block; border: 1px solid #a0a0a0; border-collapse: collapse; }
.propbody th { width: 22px; height: 19px; padding: 0; font-weight: 400; background: #f0f0f0; border: 1px solid #b5b5b5; border-width: 0 1px 1px 0; }
.propbody td { width: 500px; padding: 0 0 0 19px; border-bottom: 1px solid #b5b5b5; }
.propbody tr:first-child th { height: 23px; }
.propbody .sel th { background: #ffd28a; color: #6b1a5a; }
.sel td { background: #0078d7; color: #fff; }
.link td { color: #00f; }
.dim td { color: #777; }

/* status */
.status { display: flex; gap: 2px; height: 22px; border-top: 1px solid #ddd; background: #f5f5f5; white-space: nowrap; }
.status > span { border: 1px solid #d2d2d2; padding: 2px 1px 0; background: linear-gradient(#fdfdfd, #f0f0f0); }
.s0 { width: 148px; } .s1 { width: 78px; } .s2 { width: 98px; } .s3 { width: 48px; } .s4 { flex: 1; }

/* taskbar */
.taskbar { display: flex; height: 40px; background: #04151a; color: #fff; align-items: center; }
.t-win { width: 48px; height: 40px; }
.t-win svg { width: 16px; height: 16px; display: block; margin: auto; }
.t-search { width: 150px; height: 30px; margin-right: 3px; display: flex; align-items: center; gap: 3px; padding: 0 7px 0 1px; background: #4d4d4d; }
.t-search input { flex: 1; width: 50px; background: none; border: 0; padding: 0; }
.t-search input::placeholder { color: #b4b4b4; opacity: 1; }
.lens { width: 18px; height: 18px; }
.big { width: 24px; height: 24px; display: block; margin: auto; }
.ieb { margin: 0; flex: none; color: #0b7ce0; }
.wide { width: 30px; height: 26px; display: block; margin: 0 auto 5px 8px; }
.t-app { width: 49px; height: 40px; border-bottom: 2px solid transparent; }
.t-app.run { background: linear-gradient(#76b9ed, #76b9ed) center 38px / 40px 2px no-repeat; background-origin: border-box; background-clip: border-box; }
.t-app.active { background: #3c474b; border-bottom-color: #76b9ed; }
.tray { margin-left: auto; display: flex; align-items: center; height: 40px; padding-right: 9px; margin-right: 4px; border-right: 1px solid #666; }
.t16 { width: 16px; height: 16px; margin-right: 8px; }
.t18 { width: 18px; height: 18px; margin: 0 16px 0 12px; }
.lang { font-size: 13px; margin-left: 2px; }
.clock { width: 62px; display: flex; flex-direction: column; align-items: center; line-height: 19px; margin-right: 18px; }
.note { width: 26px; height: 24px; }
.badge { font: 700 12px "Noto Sans", sans-serif; fill: #fff; text-anchor: middle; }

/* section editor window */
.editor { position: absolute; left: 414px; top: 132px; width: 930px; height: 571px; border: 1px solid #444; padding: 0 8px 6px; background: #d7e3f1; display: flex; flex-direction: column; }
.editor h2 { height: 30px; margin: 0 -8px; padding: 11px 7px 0; color: #8b939b; background: linear-gradient(#b9c9d9, #d7e3f1); flex: none; }
.etabs { display: flex; align-items: flex-end; height: 20px; background: #f0f0f0; flex: none; }
.etabs button { width: 39px; height: 18px; padding-right: 6px; border: 1px solid #ddd; border-bottom: 0; }
.etabs .on { width: 45px; height: 20px; background: #fff; border-color: #fff; padding-right: 8px; }
.ebody { flex: 1; display: flex; flex-direction: column; background: #f0f0f0; border: solid #fff; border-width: 4px 3px 2px 3px; min-height: 0; }
.etools { height: 27px; padding-left: 4px; flex: none; }
.ecoords { height: 29px; padding-left: 4px; flex: none; }
.grip { width: 2px; height: 16px; background: repeating-linear-gradient(#bbb 0 2px, transparent 2px 5px); margin-right: -2px; }
.radios { display: flex; gap: 7px; padding: 3px 9px 3px 2px; background: #ededed; }
.radios label { display: flex; align-items: center; gap: 9px; }
.radios input { appearance: none; margin: 0; width: 11px; height: 11px; border: 1px solid #aaa; border-radius: 50%; background: #fff; }
.radios label:first-child { gap: 8px; }
.num { display: flex; align-items: center; gap: 8px; margin-left: -4px; font-size: 13px; }
.num.second { margin-left: 4px; }
.ecoords > span { font-size: 13px; margin-left: -2px; }
.spin { position: relative; display: flex; }
.spin input { width: 78px; height: 23px; border: 1px solid #888; background: #f5f5f5; color: #777; text-align: right; padding: 0 17px 1px 0; }
.spin i::before, .spin i::after { content: ""; position: absolute; right: 4px; border: 3px solid transparent; }
.spin i::before { top: 4px; border-top: 0; border-bottom-color: #555; }
.spin i::after { bottom: 4px; border-bottom: 0; border-top-color: #555; }
.canvas { flex: 1; min-height: 0; width: 100%; background: #000; }
.canvas path { fill: none; }
.canvas .axis { stroke: #008000; }
.canvas .mesh { stroke: #c0c0c0; }
.canvas .dimline { stroke: #fff; stroke-width: 2; }
.canvas .shape { stroke: #f00; stroke-width: 3; }
.big-n { font: 19px "DejaVu Serif", serif; fill: #0f0; stroke: #0f0; stroke-width: .5; text-anchor: middle; }
.small-n { font: 12px "Liberation Mono", monospace; fill: #b0b0b0; text-anchor: middle; }
.dyn { height: 29px; padding: 2px; flex: none; }
.dyn button { width: 58px; height: 23px; border: 1px solid #0078d7; background: #e1edf8; }
.estatus { display: flex; gap: 2px; height: 25px; padding-top: 3px; background: #f7f7f7; flex: none; }
.estatus span { border: 1px solid #d5d5d5; background: linear-gradient(#fdfdfd, #f0f0f0); padding: 2px 0 0; white-space: nowrap; overflow: hidden; }
.pos { width: 98px; font-family: Roboto, "Noto Sans CJK SC", sans-serif; }
.hint { flex: 1; display: flex; justify-content: space-between; }
.hint svg { width: 12px; height: 12px; align-self: flex-end; }

/* define-grid dialog */
.dialog { position: absolute; left: 65px; top: 223px; width: 411px; height: 223px; border: 1px solid #3f8fe0; background: #f0f0f0; box-shadow: 0 3px 12px rgba(0, 0, 0, .4); display: flex; flex-direction: column; }
.dialog header { display: flex; justify-content: space-between; align-items: center; height: 25px; padding: 0 9px 0 3px; background: #fff; }
.dialog header svg { display: block; width: 12px; height: 12px; stroke: #111; fill: none; }
.dbody { padding: 14px 13px 0; display: flex; flex-direction: column; gap: 9px; }
fieldset { margin: 0; border: 1px solid #dcdcdc; padding: 2px 9px 6px 7px; height: 64px; min-width: 0; }
legend { padding: 0; height: 16px; white-space: nowrap; }
.area { display: block; width: 100%; height: 41px; resize: none; border: 1px solid #777; background: #fff; padding: 1px 2px; font: 10px/16px "Liberation Mono", monospace; outline: 0; }
div.area { border-color: #5b7590; }
mark { background: #0078d7; color: #fff; border-right: 1px solid #f80; }
.dbtns { display: flex; gap: 15px; justify-content: flex-end; padding: 4px 1px 0 0; }
.dbtns button { width: 72px; height: 23px; border: 1px solid #adadad; background: #e1e1e1; }

/* highlights and floating widgets */
.redbox { position: absolute; border: 7px solid #f00; pointer-events: none; }
.r-title { left: 36px; top: 206px; width: 136px; height: 49px; }
.r-tool { left: 412px; top: 186px; width: 119px; height: 30px; }
.orb { position: absolute; left: 1016px; top: -27px; width: 46px; height: 46px; border-radius: 50%; border: 2px solid #e5e5e5; background: #3cc05a; box-shadow: inset 0 0 0 1px #16823c, 0 2px 6px rgba(0, 0, 0, .6); color: #fff; font-weight: 700; text-align: center; padding-top: 24px; }
.ime { position: absolute; right: 0; top: 704px; display: flex; align-items: center; gap: 6px; height: 24px; padding-right: 3px; background: #fff; border-top: 1px solid #999; }
.ime svg { width: 16px; height: 16px; }
.ime .s28 { width: 28px; height: 28px; }
.ime b { font-size: 16px; color: #1b73c8; }
```
